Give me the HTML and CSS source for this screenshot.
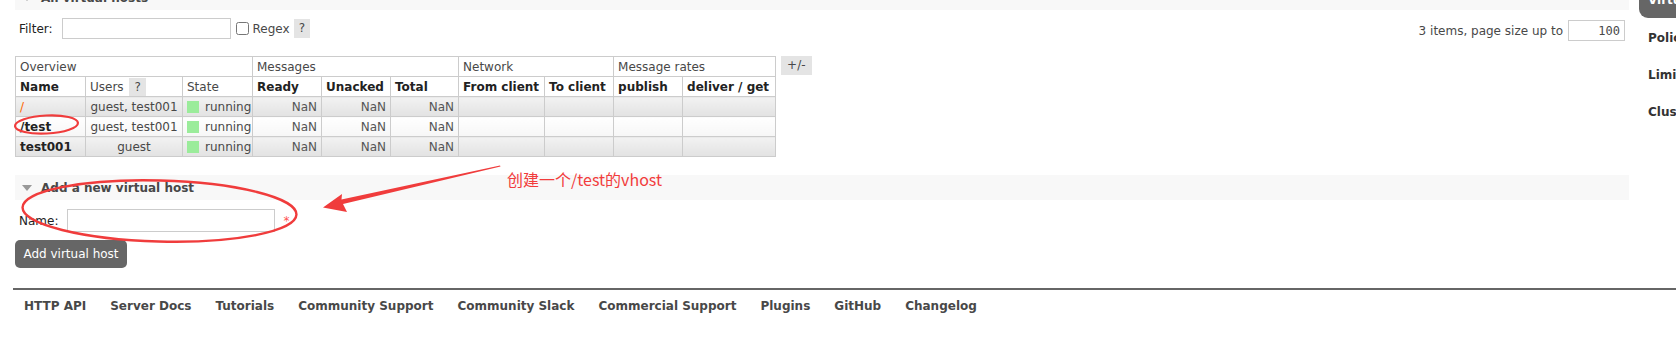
FILE: index.html
```html
<!DOCTYPE html>
<html>
<head>
<meta charset="utf-8">
<link rel="stylesheet" href="styles.css">
</head>
<body>
<div class="layout">
  <div class="main">
    <div class="section">
      <h2 class="sec-head first">All virtual hosts</h2>
      <div class="filter-row">
        <div class="filter-left">
          <label class="lbl">Filter:</label>
          <input class="txt filter-input" type="text">
          <input class="chk" type="checkbox">
          <span class="regex">Regex</span>
          <span class="help">?</span>
        </div>
        <div class="filter-right">
          <span>3 items, page size up to</span>
          <input class="txt page-size" type="text" value="100">
        </div>
      </div>
      <div class="table-wrap">
        <table class="list">
          <colgroup>
            <col class="c-name"><col class="c-users"><col class="c-state"><col class="c-ready"><col class="c-unacked"><col class="c-total"><col class="c-from"><col class="c-to"><col class="c-pub"><col class="c-del">
          </colgroup>
          <thead>
            <tr class="group">
              <th colspan="3">Overview</th>
              <th colspan="3">Messages</th>
              <th colspan="2">Network</th>
              <th colspan="2">Message rates</th>
            </tr>
            <tr class="cols">
              <th class="b">Name</th>
              <th>Users <span class="help">?</span></th>
              <th>State</th>
              <th class="b">Ready</th>
              <th class="b">Unacked</th>
              <th class="b">Total</th>
              <th class="b">From client</th>
              <th class="b">To client</th>
              <th class="b">publish</th>
              <th class="b">deliver / get</th>
            </tr>
          </thead>
          <tbody>
            <tr class="alt">
              <td class="name orange">/</td>
              <td class="c">guest, test001</td>
              <td><div class="state"><span class="sq"></span>running</div></td>
              <td class="r">NaN</td><td class="r">NaN</td><td class="r">NaN</td>
              <td></td><td></td><td></td><td></td>
            </tr>
            <tr class="even">
              <td class="name">/test</td>
              <td class="c">guest, test001</td>
              <td><div class="state"><span class="sq"></span>running</div></td>
              <td class="r">NaN</td><td class="r">NaN</td><td class="r">NaN</td>
              <td></td><td></td><td></td><td></td>
            </tr>
            <tr class="alt">
              <td class="name">test001</td>
              <td class="c">guest</td>
              <td><div class="state"><span class="sq"></span>running</div></td>
              <td class="r">NaN</td><td class="r">NaN</td><td class="r">NaN</td>
              <td></td><td></td><td></td><td></td>
            </tr>
          </tbody>
        </table>
        <span class="toggle">+/-</span>
      </div>
    </div>
    <div class="section second">
      <h2 class="sec-head">Add a new virtual host</h2>
      <div class="form-row">
        <label class="lbl">Name:</label>
        <input class="txt name-input" type="text">
        <span class="req">*</span>
      </div>
      <button class="btn">Add virtual host</button>
    </div>
  </div>
  <div class="sidebar">
    <div class="tab">Virtual Hosts</div>
    <div class="nav-item">Policies</div>
    <div class="nav-item">Limits</div>
    <div class="nav-item">Cluster</div>
  </div>
</div>
<footer class="footer">
  <a>HTTP API</a><a>Server Docs</a><a>Tutorials</a><a>Community Support</a><a>Community Slack</a><a>Commercial Support</a><a>Plugins</a><a>GitHub</a><a>Changelog</a>
</footer>

<svg class="annot" width="1676" height="354" viewBox="0 0 1676 354">
  <ellipse cx="46.5" cy="124.5" rx="31.5" ry="9" fill="none" stroke="#f03c3c" stroke-width="2.2" transform="rotate(-3 46.5 124.5)"/>
  <ellipse cx="159.5" cy="211" rx="137" ry="30.5" fill="none" stroke="#f03c3c" stroke-width="2.4" transform="rotate(1.5 159.5 211)"/>
  <polygon points="500,165.5 500.5,166.5 343,204 347,212 323,207.5 342,194 341.5,199.5" fill="#f03c3c"/>
</svg>
<div class="note">创建一个/test的vhost</div>
</body>
</html>
```
FILE: styles.css
```css
html, body {
  margin: 0;
  padding: 0;
}
body {
  width: 1676px;
  height: 354px;
  overflow: hidden;
  position: relative;
  font-family: "DejaVu Sans", Verdana, sans-serif;
  font-size: 12px;
  color: #484848;
  background: #fff;
}
.layout {
  display: flex;
  padding-left: 15px;
}
.main {
  width: 1614px;
  flex: none;
}
.sidebar {
  flex: none;
  width: 200px;
  margin-left: 10px;
}
.sec-head {
  margin: 0;
  height: 25px;
  background: #f8f8f8;
  display: flex;
  align-items: center;
  padding-left: 7px;
  font-size: 12px;
  font-weight: bold;
  color: #484848;
}
.sec-head::before {
  content: "";
  width: 0;
  height: 0;
  border-left: 5px solid transparent;
  border-right: 5px solid transparent;
  border-top: 6px solid #999;
  margin-right: 9px;
}
.sec-head.first {
  margin-top: -15px;
}
.filter-row {
  display: flex;
  justify-content: space-between;
  margin-top: 8px;
  height: 23px;
}
.filter-left {
  display: flex;
  align-items: center;
  height: 21px;
}
.filter-right {
  display: flex;
  align-items: center;
  margin-top: 2px;
  height: 21px;
  margin-right: 4px;
}
.lbl {
  margin-left: 4px;
  color: #222;
}
.txt {
  box-sizing: border-box;
  border: 1px solid #ccc;
  height: 21px;
  padding: 0 4px;
  font-family: "DejaVu Sans", sans-serif;
  font-size: 12px;
  color: #484848;
  margin: 0;
  outline: none;
}
.filter-input {
  width: 169px;
  margin-left: 9px;
}
.chk {
  margin: 0 0 0 5px;
  width: 13px;
  height: 13px;
}
.regex {
  margin-left: 4px;
}
.help {
  display: inline-block;
  background: #e4e4e4;
  padding: 0 5px;
  line-height: 19px;
  margin-left: 4px;
  font-weight: normal;
}
.page-size {
  width: 57px;
  margin-left: 5px;
  text-align: right;
  font-family: "DejaVu Sans Mono", monospace;
  font-size: 12px;
}
.table-wrap {
  display: flex;
  align-items: flex-start;
  margin-top: 15px;
}
.list {
  border-collapse: collapse;
  table-layout: fixed;
  width: 760px;
}
.c-name { width: 70px; }
.c-users { width: 97px; }
.c-state { width: 70px; }
.c-ready { width: 69px; }
.c-unacked { width: 69px; }
.c-total { width: 68px; }
.c-from { width: 86px; }
.c-to { width: 69px; }
.c-pub { width: 69px; }
.c-del { width: 93px; }
.list tr {
  height: 20px;
}
.list th, .list td {
  border: 1px solid #ccc;
  height: 19px;
  padding: 0 4px;
  line-height: 18px;
  white-space: nowrap;
  overflow: hidden;
  text-align: left;
  vertical-align: middle;
}
.list th {
  font-weight: normal;
  color: #484848;
  background: #fff;
}
.list th.b {
  font-weight: bold;
  color: #222;
}
.list th .help {
  margin-left: 2px;
  line-height: 18px;
  vertical-align: top;
}
.list tr.alt td {
  background: linear-gradient(#f2f2f2, #e2e2e2);
}
.list tr.even td {
  background: linear-gradient(#ffffff, #f6f6f6);
}
.list td.name {
  font-weight: bold;
  color: #222;
}
.list td.orange {
  color: #f60;
  font-weight: normal;
}
.list td.c {
  text-align: center;
}
.list td.r {
  text-align: right;
  color: #555;
}
.state {
  display: flex;
  align-items: center;
  height: 18px;
}
.sq {
  flex: none;
  width: 12px;
  height: 12px;
  background: #9bec9b;
  margin-right: 6px;
}
.toggle {
  margin-left: 5px;
  background: #e4e4e4;
  padding: 0 6px;
  line-height: 19px;
  height: 19px;
  color: #484848;
}
.section.second {
  margin-top: 18px;
}
.form-row {
  display: flex;
  align-items: center;
  margin-top: 9px;
  height: 23px;
}
.name-input {
  width: 208px;
  height: 23px;
  margin-left: 9px;
}
.req {
  color: #f55;
  margin-left: 8px;
  font-size: 12px;
}
.btn {
  display: block;
  margin-top: 8px;
  width: 112px;
  height: 28px;
  padding: 0;
  border: none;
  border-radius: 5px;
  background: #666;
  color: #fff;
  font-family: "DejaVu Sans", sans-serif;
  font-size: 12px;
}
.tab {
  margin-top: -18px;
  height: 36px;
  line-height: 36px;
  background: #666;
  color: #fff;
  font-weight: bold;
  padding-left: 9px;
  border-radius: 0 0 0 9px;
}
.nav-item {
  padding-left: 9px;
  line-height: 37px;
  height: 37px;
  font-weight: bold;
  color: #333;
  margin-top: 2px;
}
.nav-item + .nav-item {
  margin-top: 0;
}
.footer {
  margin-top: 20px;
  margin-left: 13px;
  border-top: 2px solid #666;
  padding-top: 9px;
  display: flex;
}
.footer a {
  padding: 0 12px;
  font-weight: bold;
  color: #484848;
  line-height: 14px;
}
.footer a:first-child {
  padding-left: 11px;
}
.annot {
  position: absolute;
  left: 0;
  top: 0;
  pointer-events: none;
}
.note {
  position: absolute;
  left: 507px;
  top: 169px;
  font-family: "Noto Sans CJK SC", "Noto Sans", sans-serif;
  font-size: 16px;
  line-height: 20px;
  color: #f23c3c;
}
```
